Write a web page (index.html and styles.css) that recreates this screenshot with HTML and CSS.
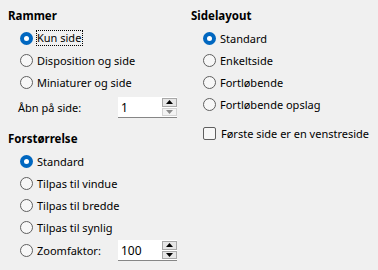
FILE: index.html
```html
<!DOCTYPE html>
<html lang="da">
<head>
<meta charset="utf-8">
<link rel="stylesheet" href="styles.css">
</head>
<body>
<div class="dialog">
  <div class="col left">
    <div class="head">Rammer</div>
    <div class="row radio-row"><span class="radio on"></span><span class="label focus">Kun side</span></div>
    <div class="row radio-row"><span class="radio"></span><span class="label">Disposition og side</span></div>
    <div class="row radio-row"><span class="radio"></span><span class="label">Miniaturer og side</span></div>
    <div class="field-row open">
      <span class="field-label">Åbn på side:</span>
      <div class="spin">
        <span class="val">1</span>
        <div class="btns">
          <span class="btn up"><svg width="7" height="4" viewBox="0 0 7 4"><path d="M0 4 L3.5 0 L7 4 Z" fill="#000"/></svg></span>
          <span class="btn down disabled"><svg width="7" height="4" viewBox="0 0 7 4"><path d="M0 0 L3.5 4 L7 0 Z" fill="#8c8c8c"/></svg></span>
        </div>
      </div>
    </div>
    <div class="head second">Forstørrelse</div>
    <div class="row radio-row"><span class="radio on"></span><span class="label">Standard</span></div>
    <div class="row radio-row"><span class="radio"></span><span class="label">Tilpas til vindue</span></div>
    <div class="row radio-row"><span class="radio"></span><span class="label">Tilpas til bredde</span></div>
    <div class="row radio-row"><span class="radio"></span><span class="label">Tilpas til synlig</span></div>
    <div class="field-row zoom">
      <span class="radio"></span><span class="label zlabel">Zoomfaktor:</span>
      <div class="spin">
        <span class="val">100</span>
        <div class="btns">
          <span class="btn up"><svg width="7" height="4" viewBox="0 0 7 4"><path d="M0 4 L3.5 0 L7 4 Z" fill="#000"/></svg></span>
          <span class="btn down"><svg width="7" height="4" viewBox="0 0 7 4"><path d="M0 0 L3.5 4 L7 0 Z" fill="#000"/></svg></span>
        </div>
      </div>
    </div>
  </div>
  <div class="col right">
    <div class="head">Sidelayout</div>
    <div class="row radio-row"><span class="radio on"></span><span class="label">Standard</span></div>
    <div class="row radio-row"><span class="radio"></span><span class="label">Enkeltside</span></div>
    <div class="row radio-row"><span class="radio"></span><span class="label">Fortløbende</span></div>
    <div class="row radio-row"><span class="radio"></span><span class="label">Fortløbende opslag</span></div>
    <div class="row check-row"><span class="check"></span><span class="label">Første side er en venstreside</span></div>
  </div>
</div>
</body>
</html>
```
FILE: styles.css
```css
html, body {
  margin: 0;
  padding: 0;
  background: #f0f0f0;
}
body {
  width: 378px;
  height: 270px;
  overflow: hidden;
  font-family: "Noto Sans", "Open Sans", sans-serif;
  font-size: 11px;
  color: #000;
}
.dialog {
  display: flex;
  padding: 5px 0 0 8px;
}
.col.left {
  width: 183px;
}
.col.right {
  flex: 1;
}
.head {
  height: 22px;
  line-height: 22px;
  font-weight: bold;
  font-size: 11.5px;
}
.head.second {
  margin-top: 10px;
}
.row {
  height: 22px;
  display: flex;
  align-items: center;
  padding-left: 12px;
}
.radio {
  box-sizing: border-box;
  width: 13px;
  height: 13px;
  border-radius: 50%;
  border: 1px solid #5f5f5f;
  background: #f7f7f7;
  flex: none;
  position: relative;
}
.radio.on {
  border: none;
  background: #0067c0;
}
.radio.on::after {
  content: "";
  position: absolute;
  left: 4px;
  top: 4px;
  width: 5px;
  height: 5px;
  border-radius: 50%;
  background: #fff;
}
.label {
  margin-left: 4px;
  white-space: nowrap;
}
.label.focus {
  outline: 1px dotted #000;
  outline-offset: 0;
  padding: 0 1px 0 0;
  margin-left: 4px;
  line-height: 14px;
}
.check {
  box-sizing: border-box;
  width: 13px;
  height: 13px;
  border: 1px solid #5f5f5f;
  border-radius: 2px;
  background: #f7f7f7;
  flex: none;
}
.check-row {
  margin-top: 7px;
}
.check-row .label {
  margin-left: 5px;
}
.field-row {
  display: flex;
  align-items: center;
  height: 21px;
}
.field-row.open {
  margin-top: 4px;
  padding-left: 10px;
}
.field-label {
  width: 100px;
}
.field-row.zoom {
  margin-top: 2px;
  padding-left: 12px;
}
.zlabel {
  width: 81px;
}
.spin {
  box-sizing: border-box;
  width: 59px;
  height: 21px;
  background: #fff;
  border-bottom: 1px solid #868686;
  display: flex;
  align-items: center;
  justify-content: space-between;
}
.val {
  padding-left: 3px;
  font-size: 12px;
}
.btns {
  display: flex;
  flex-direction: column;
  gap: 1px;
  align-self: flex-start;
  margin-top: 1px;
}
.btn {
  box-sizing: border-box;
  width: 15px;
  height: 8.5px;
  display: flex;
  align-items: center;
  justify-content: center;
  background: #e6e6e6;
  border: 1px solid #a8a8a8;
}
.btn.disabled {
  background: #f3f3f3;
  border-color: #d4d4d4;
}
.btn svg {
  display: block;
}
```
